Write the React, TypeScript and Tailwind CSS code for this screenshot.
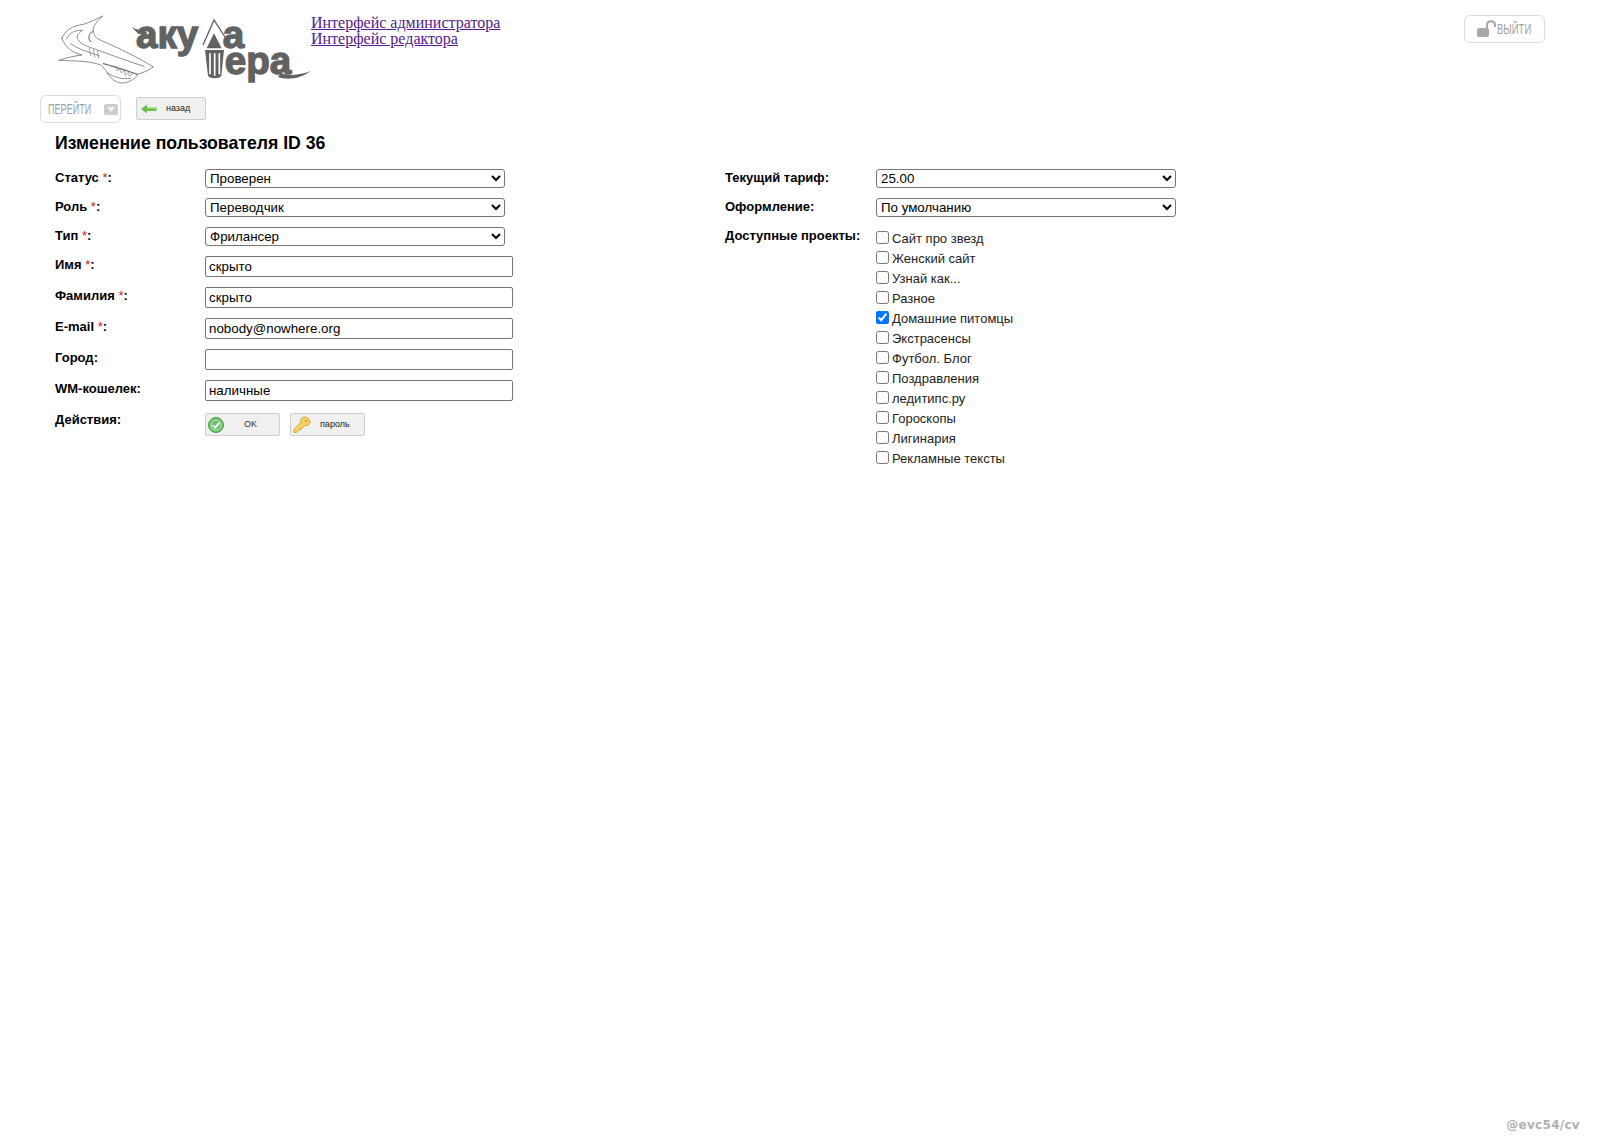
function Logo() {
  return (
    <svg width="256" height="85" viewBox="15 0 768 255" className="shrink-0">
      {/* shark */}
      <g fill="none" stroke="#777" strokeWidth="2.500" strokeLinejoin="round" strokeLinecap="round">
        <path fill="#fff" d="M36 100 C44 76 68 62 100 58 C120 52 140 42 158 33 C142 48 128 62 130 78 C132 92 138 100 152 106 C205 128 265 158 310 186 C292 198 276 204 262 208 C262 216 248 226 228 233 C206 238 186 226 172 204 C166 194 160 186 152 180 C120 168 82 168 26 166 C50 158 78 152 96 150 C70 144 44 128 36 100 Z" />
        <path d="M50 102 C56 84 76 74 98 76 C84 84 78 94 84 104 C94 120 118 126 150 138 C190 152 232 168 282 184" />
        <path d="M130 78 C116 86 112 98 122 110" strokeWidth="4" stroke="#8a8a8a" />
        <path d="M62 116 C84 132 116 142 148 152" />
        <path d="M160 176 C192 184 226 196 262 208" strokeWidth="3.500" stroke="#666" />
        <path d="M172 204 C192 216 216 224 242 220" />
        <path d="M118 130 L122 152 M130 134 L134 156 M142 138 L146 160" strokeWidth="2" />
        <path d="M196 186 L202 198 L208 190 L214 204 L222 196 L226 210 L236 202 L238 214 L248 206" strokeWidth="2" />
      </g>
      {/* wordmark */}
      <path d="M246 66 C262 78 276 70 292 84 L282 94 C270 86 258 84 246 66 Z" fill="#626262" />
      <text
        fontFamily="'Liberation Sans', sans-serif"
        fontWeight="700"
        fontSize="116"
        fill="#626262"
        stroke="#626262"
        strokeWidth="4"
      >
        <tspan x="258" y="128">аку</tspan>
        <tspan x="518" y="128">а</tspan>
        <tspan x="524" y="206">ера</tspan>
      </text>
      <path d="M692 204 C720 214 750 210 782 198 C752 222 712 226 684 216 Z" fill="#626262" />
      {/* pencil */}
      <path d="M459 120 L492 45 L525 96" fill="none" stroke="#626262" strokeWidth="4" />
      <path d="M492 85 L470 130 L515 130 Z" fill="#626262" />
      <path d="M465 135 H522 L514 212 C510 222 478 222 474 212 Z" fill="#626262" />
      <path d="M480 145 V208 M494 145 V212 M508 145 V208" stroke="#fff" strokeWidth="5" />
    </svg>
  );
}

function GrayButton({ children, className }: { children: React.ReactNode; className: string }) {
  return (
    <button
      type="button"
      className={`flex h-[23px] items-center rounded-[2px] border border-[#cfcfcf] bg-[#f0f0f0] text-[9px] text-[#222] ${className}`}
    >
      {children}
    </button>
  );
}

const projects = [
  "Сайт про звезд",
  "Женский сайт",
  "Узнай как...",
  "Разное",
  "Домашние питомцы",
  "Экстрасенсы",
  "Футбол. Блог",
  "Поздравления",
  "ледитипс.ру",
  "Гороскопы",
  "Лигинария",
  "Рекламные тексты",
];

function Label({ text, required }: { text: string; required?: boolean }) {
  return (
    <label className="pt-[1px] text-[13px] leading-[16px] font-bold text-black">
      {text}
      {required && <span className="font-normal text-[#b91c1c]"> *</span>}:
    </label>
  );
}

function Pick({ value }: { value: string }) {
  return (
    <select
      defaultValue={value}
      className="h-[19px] w-[300px] rounded-[3px] border border-[#767676] bg-white text-[13.33px] leading-none text-black"
    >
      <option>{value}</option>
    </select>
  );
}

function Field({ value }: { value: string }) {
  return (
    <input
      type="text"
      defaultValue={value}
      className="h-[21px] w-[308px] rounded-[2px] border border-[#767676] bg-white px-[3px] text-[13.33px] text-black"
    />
  );
}

export default function App() {
  return (
    <div className="relative min-h-[1140px] bg-white font-['Liberation_Sans',Arial,sans-serif] text-[13px]">
      <header className="flex items-start pt-[5px] pr-[55px] pl-[55px]">
        <Logo />
        <nav className="mt-[10px] flex flex-col font-['Liberation_Serif',serif] text-[16px] leading-[16px] text-[#551a8b] underline">
          <a href="#">Интерфейс администратора</a>
          <a href="#">Интерфейс редактора</a>
        </nav>
        <button
          type="button"
          className="mt-[10px] ml-auto flex h-[28px] w-[81px] items-center rounded-[6px] border border-[#dcdcdc] pl-[12px] text-[#a0a0a0]"
        >
          <svg width="20" height="20" viewBox="0 0 20 20" className="shrink-0">
            <rect x="0" y="9" width="12" height="9" rx="2" fill="#a8a8a8" />
            <path d="M10 9 V6 C10 1 18 1 18 6 V8" fill="none" stroke="#a8a8a8" strokeWidth="2" />
          </svg>
          <span className="inline-block w-[34px] origin-left scale-x-[0.68] text-left text-[14px] whitespace-nowrap">ВЫЙТИ</span>
        </button>
      </header>

      <div className="mt-[5px] flex items-start pl-[40px]">
        <button
          type="button"
          className="flex h-[28px] w-[81px] items-center rounded-[6px] border border-[#dcdcdc] pl-[7px] text-[#a0a0a0]"
        >
          <span className="inline-block w-[56px] origin-left scale-x-[0.65] text-left text-[14px] whitespace-nowrap">ПЕРЕЙТИ</span>
          <span className="flex h-[11px] w-[14px] items-center justify-center rounded-[2px] bg-[#cccccc]">
            <svg width="8" height="5" viewBox="0 0 8 5">
              <path d="M0 0 H8 L4 5 Z" fill="#f2f2f2" />
            </svg>
          </span>
        </button>
        <GrayButton className="mt-[2px] ml-[15px] w-[70px] pl-[4px]">
          <svg width="16" height="10" viewBox="0 0 16 10" className="shrink-0">
            <path d="M0 5 L6 0.5 V3 H15.5 V7 H6 V9.5 Z" fill="#6cbf4b" />
            <path d="M6 3 H15.5 V4.500 H6 Z" fill="#b5e39b" />
          </svg>
          <span className="ml-[9px]">назад</span>
        </GrayButton>
      </div>

      <h1 className="mt-[7px] pl-[55px] text-[17.67px] leading-[26px] font-bold text-black">Изменение пользователя ID 36</h1>

      <div className="mt-[13px] flex pl-[55px]">
        <div className="grid w-[670px] grid-cols-[150px_1fr] content-start items-start gap-y-[10px]">
          <Label text="Статус" required />
          <Pick value="Проверен" />
          <Label text="Роль" required />
          <Pick value="Переводчик" />
          <Label text="Тип" required />
          <Pick value="Фрилансер" />
          <Label text="Имя" required />
          <Field value="скрыто" />
          <Label text="Фамилия" required />
          <Field value="скрыто" />
          <Label text="E-mail" required />
          <Field value="nobody@nowhere.org" />
          <Label text="Город" />
          <Field value="" />
          <Label text="WM-кошелек" />
          <Field value="наличные" />
          <Label text="Действия" />
          <div className="mt-[2px] flex gap-[10px]">
            <GrayButton className="w-[75px] pl-[2px]">
              <svg width="16" height="16" viewBox="0 0 16 16" className="shrink-0">
                <circle cx="8" cy="8" r="7.500" fill="#6cc06c" stroke="#4aa04a" />
                <circle cx="8" cy="8" r="5" fill="none" stroke="#d8f0d8" strokeWidth="0.800" />
                <path d="M4.800 8.200 L7.200 10.600 L11.200 5.800" fill="none" stroke="#fff" strokeWidth="1.800" />
              </svg>
              <span className="ml-[20px] text-[#333]">OK</span>
            </GrayButton>
            <GrayButton className="w-[75px] pl-[2px]">
              <svg width="18" height="18" viewBox="0 0 18 18" className="shrink-0">
                <path
                  d="M11.500 1 C14.500 1 17 3.500 17 6 C17 8.500 14.500 10 12 9.500 L9.500 12 H7.500 V14 H5.500 L3.500 16.500 H1 V13.500 L7.800 6.500 C7 3.500 9 1 11.500 1 Z"
                  fill="#f5d36a"
                  stroke="#d9a520"
                />
                <circle cx="13" cy="5" r="1.300" fill="#d9a520" />
              </svg>
              <span className="ml-[9px]">пароль</span>
            </GrayButton>
          </div>
        </div>

        <div className="grid grid-cols-[151px_1fr] content-start items-start gap-y-[10px]">
          <Label text="Текущий тариф" />
          <Pick value="25.00" />
          <Label text="Оформление" />
          <Pick value="По умолчанию" />
          <Label text="Доступные проекты" />
          <div className="mt-[1px] flex flex-col">
            {projects.map((name) => (
              <label key={name} className="flex h-[20px] items-center gap-[3px] text-[13px] text-[#222]">
                <input type="checkbox" defaultChecked={name === "Домашние питомцы"} className="mb-[2px] h-[13px] w-[13px]" />
                <span className="pt-[2px]">{name}</span>
              </label>
            ))}
          </div>
        </div>
      </div>

      <div className="absolute right-[20px] bottom-[6px] font-['DejaVu_Sans',sans-serif] text-[12px] font-bold tracking-[0.3px] text-[#b0b0b0]">
        @evc54/cv
      </div>
    </div>
  );
}
